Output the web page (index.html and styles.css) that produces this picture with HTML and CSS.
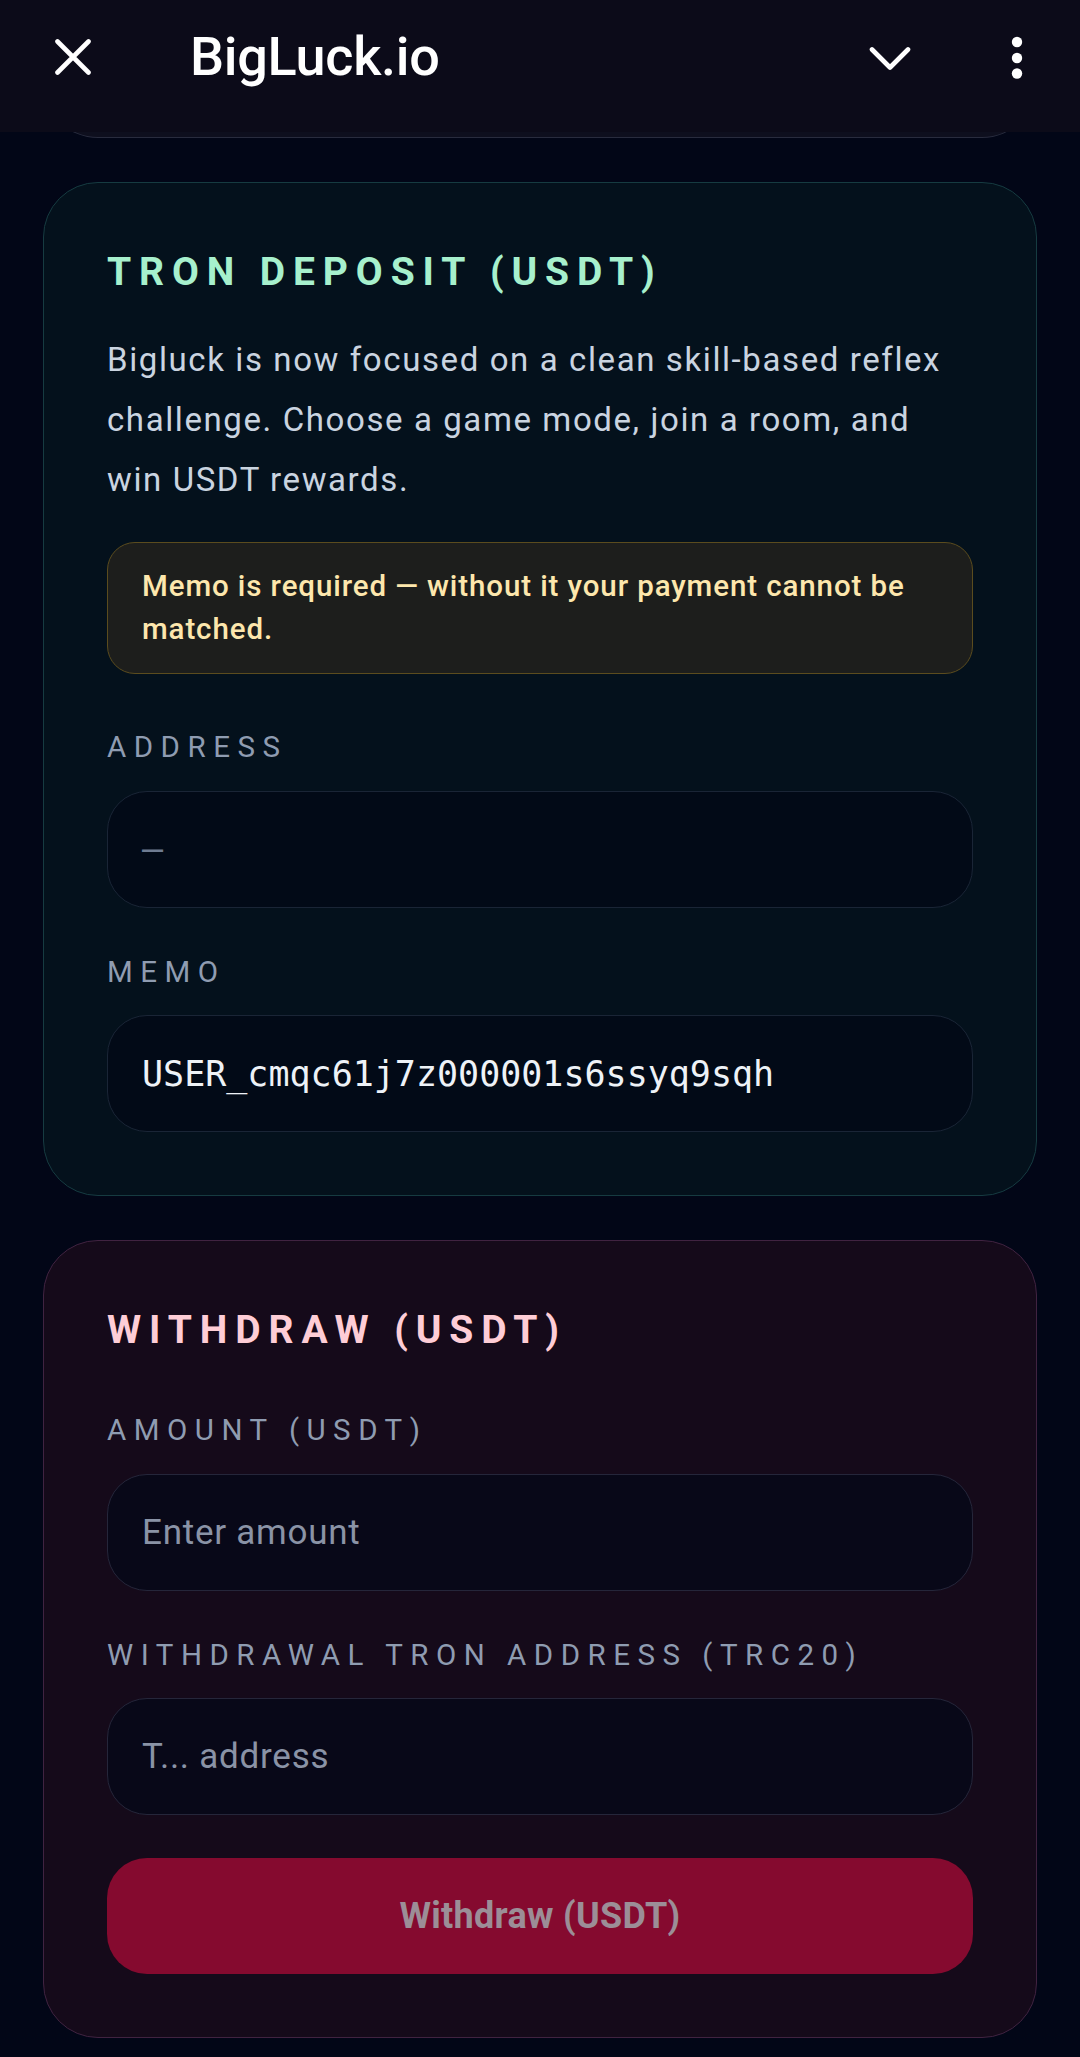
FILE: index.html
```html
<!DOCTYPE html>
<html lang="en">
<head>
<meta charset="utf-8">
<title>BigLuck.io</title>
<link rel="stylesheet" href="styles.css">
</head>
<body>
<header class="topbar">
  <svg class="icon-close" viewBox="0 0 36 36" width="36" height="36" aria-hidden="true">
    <path d="M2.5 2.5 L33.5 33.5 M33.5 2.5 L2.5 33.5" stroke="#fff" stroke-width="4.6" stroke-linecap="round" fill="none"/>
  </svg>
  <div class="brand">BigLuck.io</div>
  <div class="spacer"></div>
  <svg class="icon-chevron" viewBox="0 0 42 26" width="42" height="26" aria-hidden="true">
    <path d="M3 3.5 L21 21.5 L39 3.5" stroke="#fff" stroke-width="4.6" stroke-linecap="round" stroke-linejoin="round" fill="none"/>
  </svg>
  <svg class="icon-dots" viewBox="0 0 12 44" width="12" height="44" aria-hidden="true">
    <circle cx="6" cy="6" r="5.2" fill="#fff"/>
    <circle cx="6" cy="22" r="5.2" fill="#fff"/>
    <circle cx="6" cy="37.5" r="5.2" fill="#fff"/>
  </svg>
</header>

<main class="page">
  <section class="card card-prev"></section>

  <section class="card card-deposit">
    <h2 class="card-title title-deposit">TRON DEPOSIT (USDT)</h2>
    <p class="intro">Bigluck is now focused on a clean skill-based reflex challenge. Choose a game mode, join a room, and win USDT rewards.</p>
    <div class="notice">Memo is required — without it your payment cannot be matched.</div>

    <div class="field">
      <div class="field-label">Address</div>
      <div class="field-box box-deposit mono muted">—</div>
    </div>
    <div class="field field-last">
      <div class="field-label">Memo</div>
      <div class="field-box box-deposit mono">USER_cmqc61j7z000001s6ssyq9sqh</div>
    </div>
  </section>

  <section class="card card-withdraw">
    <h2 class="card-title title-withdraw">WITHDRAW (USDT)</h2>
    <div class="field">
      <label class="field-label" for="amt">Amount (USDT)</label>
      <input class="field-box box-withdraw" id="amt" type="text" placeholder="Enter amount">
    </div>
    <div class="field field-tight">
      <label class="field-label" for="addr">Withdrawal Tron address (TRC20)</label>
      <input class="field-box box-withdraw" id="addr" type="text" placeholder="T... address">
    </div>
    <button class="btn-withdraw" type="button">Withdraw (USDT)</button>
  </section>
</main>
</body>
</html>
```

FILE: styles.css
```css
* { box-sizing: border-box; }

html, body {
  margin: 0;
  padding: 0;
  background: #020617;
}

body {
  font-family: Roboto, "Noto Sans", "Liberation Sans", sans-serif;
  color: #cbd5e1;
  width: 1080px;
  min-height: 2057px;
  overflow: hidden;
}

/* ---------- top bar ---------- */
.topbar {
  position: fixed;
  top: 0;
  left: 0;
  width: 1080px;
  height: 132px;
  padding: 0 57px 18px 55px;
  background: #0c0b19;
  display: flex;
  align-items: center;
  z-index: 10;
}

.icon-close { display: block; flex: none; }

.brand {
  margin-left: 99px;
  font-size: 54px;
  font-weight: 500;
  color: #ffffff;
  letter-spacing: -0.3px;
  line-height: 1;
}

.spacer { flex: 1; }

.icon-chevron { display: block; flex: none; margin-top: 4px; }

.icon-dots { display: block; flex: none; margin-left: 100px; margin-top: 2px; }

/* ---------- page ---------- */
.page {
  padding: 0 43px 40px;
  display: flex;
  flex-direction: column;
  gap: 44px;
}

.card {
  border-radius: 55px;
  border: 1.5px solid transparent;
}

.card-prev {
  height: 138px;
  background: #0e0f1e;
  border-color: #292c3e;
  border-radius: 0 0 55px 55px;
  border-top: none;
}

.card-deposit {
  background: #04111c;
  border-color: #163b41;
  padding: 66px 63px 63px;
}

.card-withdraw {
  background: #150a1a;
  border-color: #402341;
  padding: 66px 63px 63px;
}

.card-title {
  margin: 0;
  font-size: 39px;
  font-weight: 700;
  letter-spacing: 7.9px;
  line-height: 46px;
}

.title-deposit { color: #a7f0cd; margin-bottom: 35px; }
.title-withdraw { color: #fecdd6; margin-bottom: 60px; }

.intro {
  margin: 0 0 32px;
  padding-right: 14px;
  font-size: 33px;
  line-height: 60px;
  letter-spacing: 1.6px;
  color: #cad4e0;
}

.notice {
  margin-bottom: 56px;
  padding: 22px 34px;
  border: 1.5px solid #5b4c1e;
  border-radius: 28px;
  background: #1d1e1c;
  color: #fde7ad;
  font-size: 29.5px;
  font-weight: 500;
  line-height: 43px;
  letter-spacing: 0.9px;
}

/* ---------- fields ---------- */
.field { margin-bottom: 47px; }
.field-last { margin-bottom: 0; }
.field-tight { margin-bottom: 43px; }

.field-label {
  display: block;
  margin-bottom: 26px;
  font-size: 29.5px;
  line-height: 34.5px;
  letter-spacing: 7.5px;
  text-transform: uppercase;
  color: #8f9cb1;
}

.field-box {
  display: flex;
  align-items: center;
  width: 100%;
  height: 117px;
  padding: 0 34px;
  border-radius: 40px;
  border: 1.5px solid #1b2637;
  font-size: 35px;
  letter-spacing: 0.75px;
  color: #eef2f7;
  font-family: Roboto, "Noto Sans", sans-serif;
}

.box-deposit {
  background: #020a17;
  border-color: #1a2536;
}

.box-withdraw {
  background: #080818;
  border-color: #25263a;
  outline: none;
  margin: 0;
}

.box-withdraw::placeholder {
  color: #8a93a6;
  opacity: 1;
}

.mono {
  font-family: "DejaVu Sans Mono", "Liberation Mono", monospace;
  font-size: 35px;
  letter-spacing: 0;
}

.muted { color: #6f7c92; }

/* ---------- button ---------- */
.btn-withdraw {
  display: block;
  width: 100%;
  height: 116px;
  border: none;
  border-radius: 40px;
  background: #850a2f;
  color: #9c8e97;
  font-family: Roboto, "Noto Sans", sans-serif;
  font-size: 36px;
  font-weight: 700;
  letter-spacing: 0.3px;
  cursor: pointer;
}
```
